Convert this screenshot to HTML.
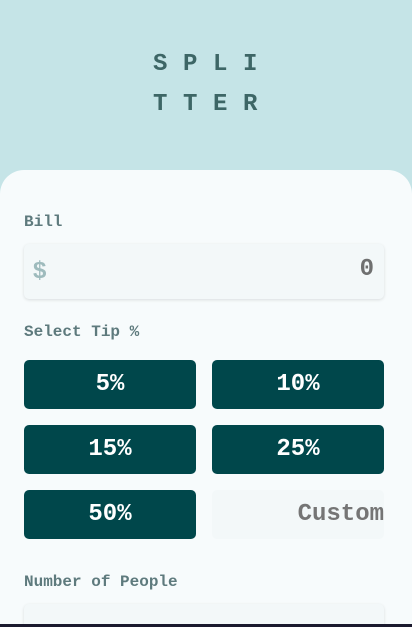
<!DOCTYPE html>
<html style="width:412px;height:627px;overflow:hidden"><head><meta charset="utf-8"><style>
*{margin:0;padding:0;box-sizing:border-box}
body{width:412px;height:627px;overflow:hidden;background:#c5e4e7;font-family:"Liberation Mono",monospace;font-weight:bold;position:relative}
.title{position:absolute;left:153px;top:45px;font-size:24px;color:#3d6666;letter-spacing:15.6px;line-height:40px}
.card{position:absolute;left:0;top:170px;width:412px;height:457px;background:#f7fbfc;border-radius:24px 24px 0 0;overflow:hidden}
.lbl{position:absolute;left:24px;font-size:16px;color:#5e7a7d;line-height:20px}
.inp{position:absolute;left:24px;width:360px;height:55px;background:#f3f8f9;border-radius:5px;box-shadow:0 1px 3px rgba(0,0,0,.12)}
.btn{position:absolute;width:172px;height:49px;background:#00474b;border-radius:5px;color:#fff;font-size:24px;text-align:center;line-height:49px}
.line{position:absolute;left:0;top:624px;width:412px;height:3px;background:#1b1a2e}
</style></head><body>
<div class="title">SPLI<br>TTER</div>
<div class="card">
<div class="lbl" style="top:42px">Bill</div>
<div class="inp" style="top:74px">
<span style="position:absolute;left:9px;top:13px;font-size:24px;color:#9ebbbd;font-family:'Liberation Sans',sans-serif">$</span>
<span style="position:absolute;right:10px;top:12px;font-size:24px;color:#6f7070">0</span>
</div>
<div class="lbl" style="top:152px">Select Tip %</div>
<div class="btn" style="left:24px;top:190px">5%</div>
<div class="btn" style="left:212px;top:190px">10%</div>
<div class="btn" style="left:24px;top:255px">15%</div>
<div class="btn" style="left:212px;top:255px">25%</div>
<div class="btn" style="left:24px;top:320px">50%</div>
<div class="btn" style="left:212px;top:320px;background:#f3f8f9;color:#757575;text-align:right">Custom</div>
<div class="lbl" style="top:402px">Number of People</div>
<div class="inp" style="top:434px;height:21px;border-radius:5px 5px 0 0"></div>
</div>
<div class="line"></div>
</body></html>
